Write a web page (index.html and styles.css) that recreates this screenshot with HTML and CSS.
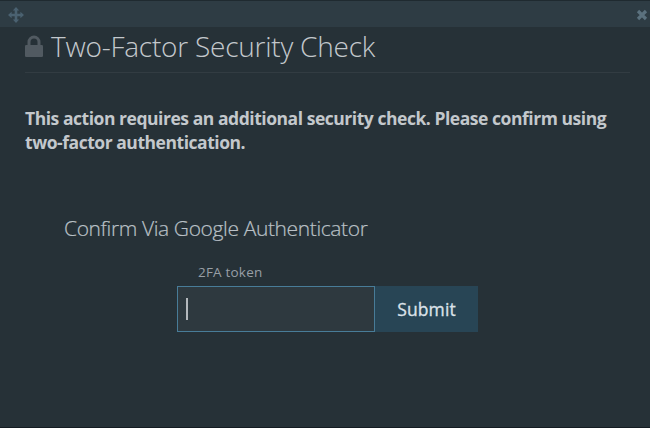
FILE: index.html
```
<!DOCTYPE html>
<html lang="en">
<head>
	<meta charset="utf-8">
	<title>Two-Factor Security Check</title>
	<link rel="stylesheet" href="styles.css">
</head>
<body>
	<div class="dialog">
		<div class="dialog-header">
			<svg class="icon-move" viewBox="0 0 16 16">
				<path d="M8 0l3.2 3.6H9.300v3.100h3.100V4.800L16 8l-3.600 3.200V9.300H9.300v3.100h1.900L8 16l-3.200-3.600h1.900V9.300H3.600v1.900L0 8l3.600-3.200v1.900h3.100V3.600H4.800z"/>
			</svg>
			<svg class="icon-close" viewBox="0 0 12 12">
				<path d="M2 2l8 8M10 2l-8 8"/>
			</svg>
		</div>
		<div class="dialog-body">
			<h1>
				<svg class="icon-lock" viewBox="0 0 18 22">
					<path class="shackle" d="M4 11V7a5 5 0 0 1 10 0v4"/>
					<rect x="0" y="10" width="18" height="12" rx="1.200"/>
				</svg>
				<span>Two-Factor Security Check</span>
			</h1>
			<p class="message">This action requires an additional security check. Please confirm using<br>two-factor authentication.</p>
			<h2>Confirm Via Google Authenticator</h2>
			<form class="token-form">
				<label for="token">2FA token</label>
				<div class="token-row">
					<div class="token-input" id="token"><span class="caret"></span></div>
					<button type="button">Submit</button>
				</div>
			</form>
		</div>
	</div>
</body>
</html>
```

FILE: styles.css
```
body {
	margin: 0;
	font-family: "Open Sans", "Noto Sans", sans-serif;
	background-color: #263137;
	color: #c3c8cc;
}
.dialog {
	height: 428px;
	box-sizing: border-box;
	border-top: 1px solid #1f2a30;
	border-bottom: 1px solid #141c22;
	overflow: hidden;
}
.dialog-header {
	display: flex;
	justify-content: space-between;
	align-items: center;
	height: 26px;
	box-sizing: border-box;
	padding: 2px 2px 0 8px;
	background-color: #2e3c44;
}
.icon-move {
	width: 16px;
	height: 16px;
	fill: #4a6170;
}
.icon-close {
	width: 12px;
	height: 12px;
	stroke: #5b717e;
	stroke-width: 3.2;
}
.dialog-body {
	padding: 0 20px 0 25px;
}
h1 {
	display: flex;
	height: 45px;
	margin: 0;
	border-bottom: 1px solid #323c42;
	font-size: 28px;
	font-weight: 300;
	line-height: 38px;
	letter-spacing: -0.23px;
	white-space: nowrap;
}
.icon-lock {
	width: 18px;
	height: 22px;
	margin: 8px 8px 0 0;
	fill: #515a61;
}
.icon-lock .shackle {
	fill: none;
	stroke: #515a61;
	stroke-width: 3;
}
.message {
	margin: 33px 0 0;
	font-size: 17.5px;
	font-weight: 700;
	line-height: 24px;
	letter-spacing: -0.46px;
	white-space: nowrap;
}
h2 {
	margin: 59px 0 0 39px;
	font-size: 21px;
	font-weight: 300;
	line-height: 30px;
	letter-spacing: -0.38px;
	white-space: nowrap;
	color: #b9c0c6;
	-webkit-text-stroke: 0.2px #b9c0c6;
}
.token-form {
	margin: 19px 0 0 152px;
}
.token-form label {
	display: block;
	margin-left: 21px;
	font-size: 13.5px;
	line-height: 20px;
	letter-spacing: 0.2px;
	color: #989fa6;
}
.token-row {
	display: flex;
	margin-top: 4px;
}
.token-input {
	display: flex;
	align-items: center;
	width: 198px;
	height: 46px;
	box-sizing: border-box;
	padding-left: 8px;
	border: 1px solid #487c98;
	background-color: #2e393f;
}
.caret {
	width: 2px;
	height: 22px;
	background-color: #b4b9bd;
}
.token-row button {
	width: 103px;
	height: 46px;
	padding: 0;
	border: 0;
	background-color: #284555;
	color: #dce2e9;
	font-family: inherit;
	font-size: 17.5px;
	font-weight: 500;
	letter-spacing: 0.1px;
	-webkit-text-stroke: 0.3px #dce2e9;
}
```
